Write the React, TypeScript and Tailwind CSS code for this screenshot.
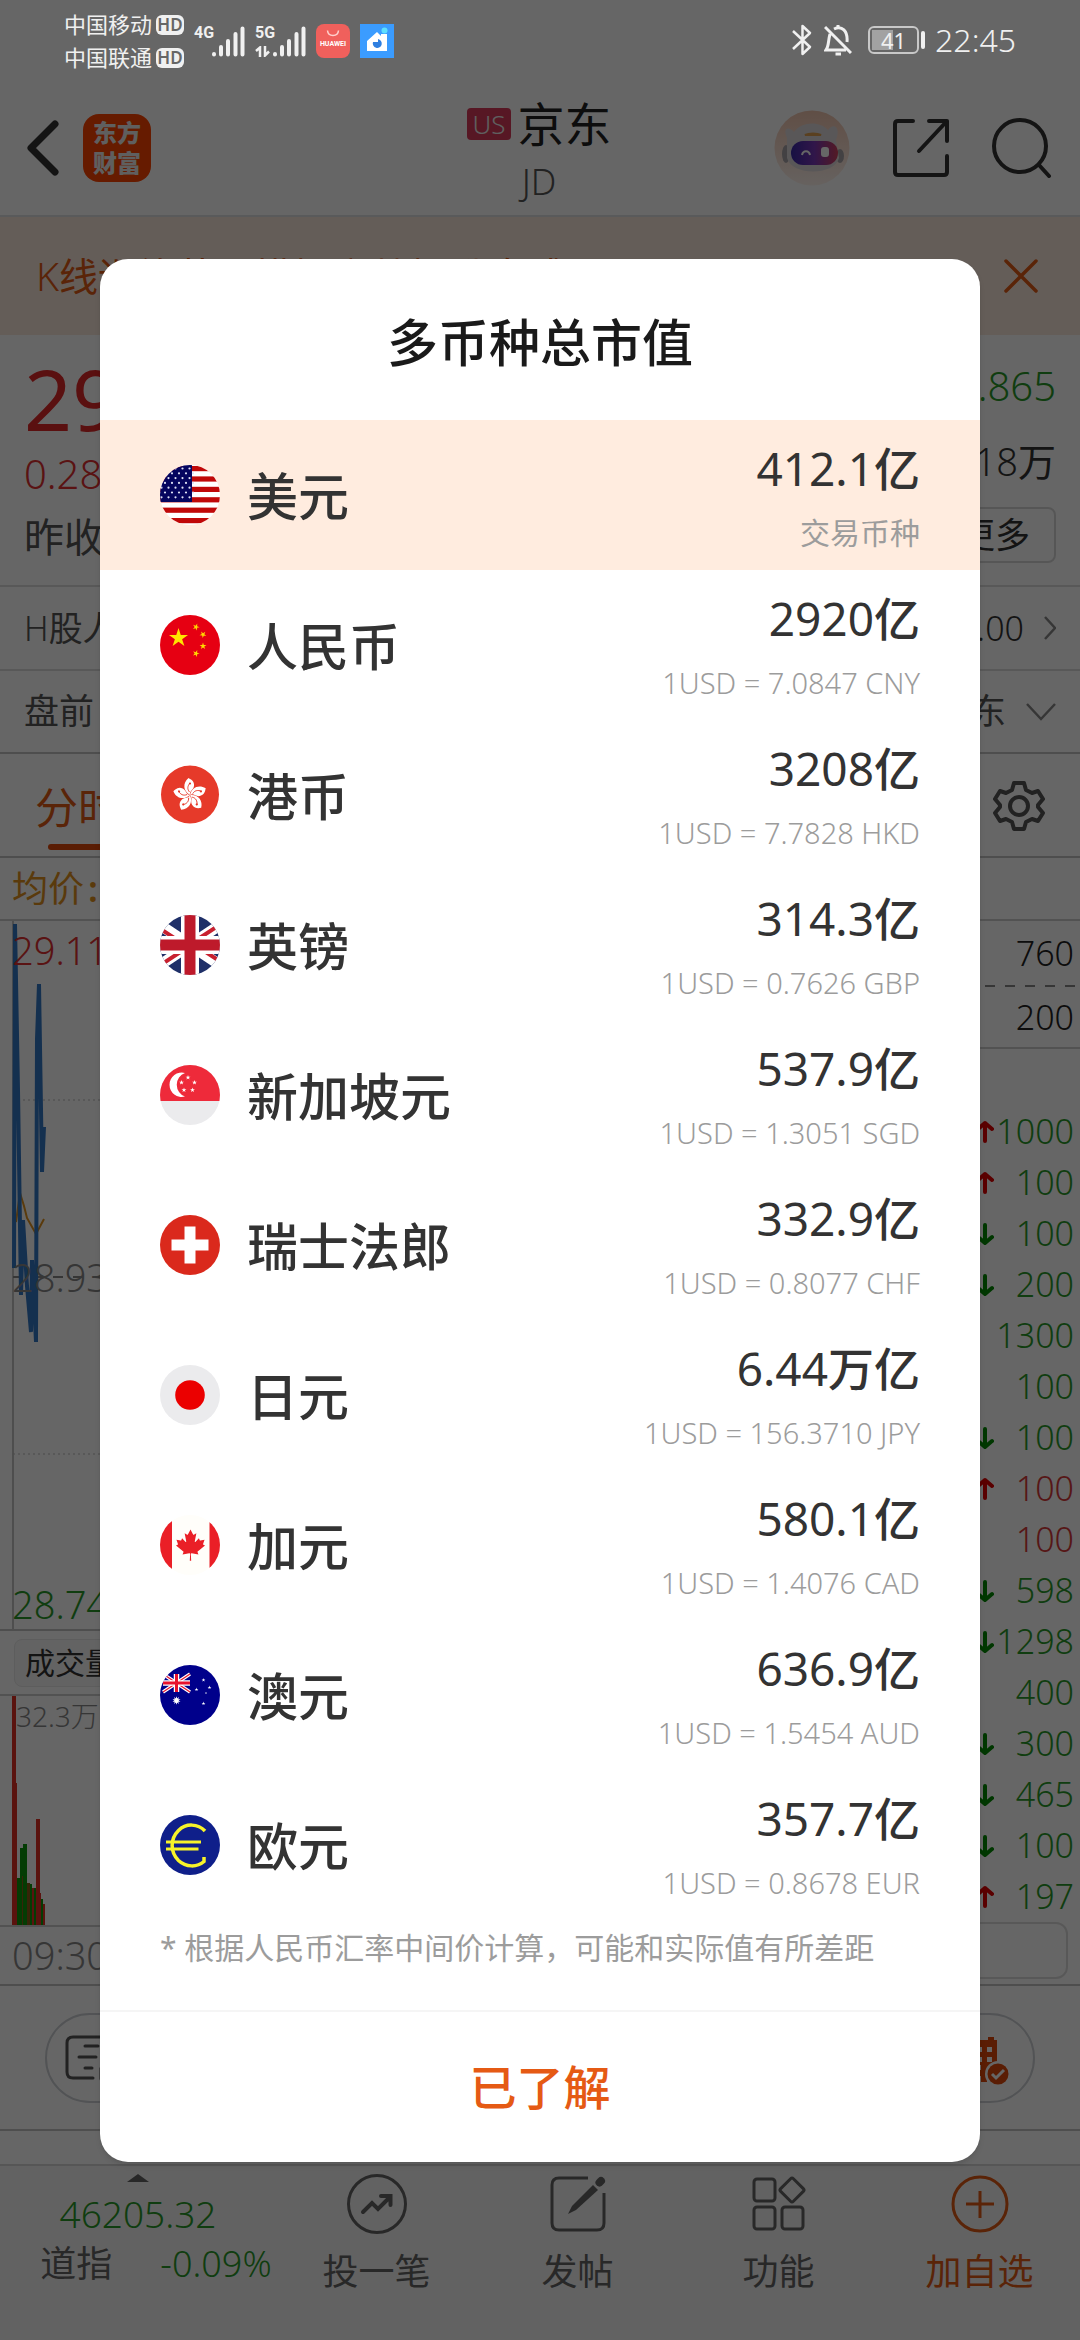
import type { ReactNode } from 'react';
import clsx from 'clsx';

/* ---------- flags ---------- */

function Flag({ id, children }: { id: string; children: ReactNode }) {
  return (
    <svg viewBox="0 0 60 60" className="size-15 shrink-0" aria-hidden="true">
      <clipPath id={`flag-${id}`}>
        <circle cx="30" cy="30" r="30" />
      </clipPath>
      <g clipPath={`url(#flag-${id})`}>{children}</g>
    </svg>
  );
}

const STAR = 'M0-1 .225-.309 .951-.309 .363.118 .588.809 0 .382-.588.809-.363.118-.951-.309-.225-.309Z';

function Star({ x, y, r, rotate = 0, fill = '#fff' }: { x: number; y: number; r: number; rotate?: number; fill?: string }) {
  return <path d={STAR} fill={fill} transform={`translate(${x} ${y}) rotate(${rotate}) scale(${r})`} />;
}

const MAPLE =
  'm-90 2030 45-863a95 95 0 0 0-111-98l-859 151 116-320a65 65 0 0 0-20-73l-941-762 212-99a65 65 0 0 0 34-79l-186-572 542 115a65 65 0 0 0 73-38l105-247 423 454a65 65 0 0 0 111-57l-204-1052 327 189a65 65 0 0 0 91-27l332-652 332 652a65 65 0 0 0 91 27l327-189-204 1052a65 65 0 0 0 111 57l423-454 105 247a65 65 0 0 0 73 38l542-115-186 572a65 65 0 0 0 34 79l212 99-941 762a65 65 0 0 0-20 73l116 320-859-151a95 95 0 0 0-111 98l45 863z';

const flags: Record<string, ReactNode> = {
  us: (
    <Flag id="us">
      <rect width="60" height="60" fill="#fff" />
      {[0, 1, 2, 3, 4, 5].map(i => (
        <rect key={i} y={1 + i * 10.4} width="60" height="5.2" fill="#c00808" />
      ))}
      <rect width="32" height="37" fill="#05055f" />
      {[0, 1, 2, 3, 4, 5, 6].map(r =>
        [0, 1, 2, 3, 4].map(c => (
          <circle key={`${r}-${c}`} cx={(r % 2 ? 5 : 1.5) + c * 7} cy={3.5 + r * 4.8} r="1.1" fill="#dfe2f5" />
        ))
      )}
    </Flag>
  ),
  cn: (
    <Flag id="cn">
      <rect width="60" height="60" fill="#e60012" />
      <Star x={18.5} y={23} r={10} fill="#ffe600" />
      <Star x={36} y={12} r={3.6} rotate={20} fill="#ffd800" />
      <Star x={43} y={19.5} r={3.6} rotate={40} fill="#ffd800" />
      <Star x={43} y={31} r={3.6} fill="#ffd800" />
      <Star x={36} y={38.5} r={3.6} rotate={20} fill="#ffd800" />
    </Flag>
  ),
  hk: (
    <Flag id="hk">
      <rect width="60" height="60" fill="#fff" />
      <circle cx="30" cy="29.5" r="29" fill="#e63a2a" />
      {[0, 72, 144, 216, 288].map(a => (
        <g key={a} transform={`translate(30 30) rotate(${a})`}>
          <path d="M0 0C-7-4-7.500-12-1.500-17C0-16 4.500-14.500 4-9C3.700-5-1-4 0 0Z" fill="#fff" />
          <path d="M-.5-3C-3-6-2.500-9 0-12" fill="none" stroke="#e63a2a" strokeWidth=".9" />
          <circle cx="0" cy="-11.500" r="1.100" fill="#e63a2a" />
        </g>
      ))}
    </Flag>
  ),
  gb: (
    <Flag id="gb">
      <rect width="60" height="60" fill="#1f2f68" />
      <path d="M-6 6 66 54M66 6-6 54" stroke="#fff" strokeWidth="11" />
      <path d="M-7 9 28 32M67 5 32 28M67 51 32 28M-7 55 28 32" stroke="#c8202f" strokeWidth="4" />
      <path d="M30 0V60M0 30H60" stroke="#fff" strokeWidth="18" />
      <path d="M30 0V60M0 30H60" stroke="#be1a2b" strokeWidth="11" />
    </Flag>
  ),
  sg: (
    <Flag id="sg">
      <rect width="60" height="60" fill="#ebebed" />
      <rect width="60" height="36" fill="#ee2a3a" />
      <path d="M25 8A12.200 12.200 0 1 0 25 31.500A12.500 12.500 0 0 1 25 8Z" fill="#fff" />
      <Star x={28} y={12.500} r={2.600} />
      <Star x={21.500} y={17.500} r={2.600} />
      <Star x={34.500} y={17.500} r={2.600} />
      <Star x={24} y={25} r={2.600} />
      <Star x={32.500} y={25} r={2.600} />
    </Flag>
  ),
  ch: (
    <Flag id="ch">
      <rect width="60" height="60" fill="#da291c" />
      <path d="M24.500 11.500h11v13h13v11h-13v13h-11v-13h-13v-11h13Z" fill="#fff" />
    </Flag>
  ),
  jp: (
    <Flag id="jp">
      <rect width="60" height="60" fill="#ebebed" />
      <circle cx="30" cy="30" r="14.800" fill="#eb0000" />
    </Flag>
  ),
  ca: (
    <Flag id="ca">
      <rect width="60" height="60" fill="#fffefa" />
      <rect width="12" height="60" fill="#ea1f27" />
      <rect x="49.500" width="12" height="60" fill="#ea1f27" />
      <path d={MAPLE} fill="#ea1f27" transform="translate(30.500 30) scale(.0078)" />
    </Flag>
  ),
  au: (
    <Flag id="au">
      <rect width="60" height="60" fill="#00008b" />
      <path d="M3 9 30 27M30 9 3 27" stroke="#fff" strokeWidth="3.400" />
      <path d="M3 9 30 27M30 9 3 27" stroke="#e8112d" strokeWidth="1.200" />
      <path d="M16.500 9V27M3 18H30" stroke="#fff" strokeWidth="5.500" />
      <path d="M16.500 9V27M3 18H30" stroke="#e8112d" strokeWidth="3" />
      <Star x={16.500} y={35.500} r={4.200} />
      <Star x={16.500} y={35.500} r={4.200} rotate={36} />
      <Star x={43.500} y={15} r={2} />
      <Star x={36.500} y={24.500} r={2} />
      <Star x={49.500} y={22.500} r={2} />
      <Star x={46} y={28} r={1.200} />
      <Star x={43.500} y={38.500} r={2} />
    </Flag>
  ),
  eu: (
    <Flag id="eu">
      <rect width="60" height="60" fill="#0f1f8a" />
      <path d="M45 16C38 8.500 26 8 18.500 15.500C10 24 10 37 18.500 45.500C26 52.500 37 52.500 44 46.500V42" fill="none" stroke="#f7f32a" strokeWidth="3.500" />
      <path d="M6 27H41M6 34H38.500" stroke="#f7f32a" strokeWidth="3" />
    </Flag>
  ),
};

/* ---------- data ---------- */

const currencies = [
  { flag: 'us', name: '美元', value: '412.1亿', note: '交易币种', active: true },
  { flag: 'cn', name: '人民币', value: '2920亿', note: '1USD = 7.0847 CNY' },
  { flag: 'hk', name: '港币', value: '3208亿', note: '1USD = 7.7828 HKD' },
  { flag: 'gb', name: '英镑', value: '314.3亿', note: '1USD = 0.7626 GBP' },
  { flag: 'sg', name: '新加坡元', value: '537.9亿', note: '1USD = 1.3051 SGD' },
  { flag: 'ch', name: '瑞士法郎', value: '332.9亿', note: '1USD = 0.8077 CHF' },
  { flag: 'jp', name: '日元', value: '6.44万亿', note: '1USD = 156.3710 JPY' },
  { flag: 'ca', name: '加元', value: '580.1亿', note: '1USD = 1.4076 CAD' },
  { flag: 'au', name: '澳元', value: '636.9亿', note: '1USD = 1.5454 AUD' },
  { flag: 'eu', name: '欧元', value: '357.7亿', note: '1USD = 0.8678 EUR' },
];

const trades = [
  { size: 1000, dir: 'up' },
  { size: 100, dir: 'up' },
  { size: 100, dir: 'down' },
  { size: 200, dir: 'down' },
  { size: 1300 },
  { size: 100 },
  { size: 100, dir: 'down' },
  { size: 100, dir: 'up', red: true },
  { size: 100, red: true },
  { size: 598, dir: 'down' },
  { size: 1298, dir: 'down' },
  { size: 400 },
  { size: 300, dir: 'down' },
  { size: 465, dir: 'down' },
  { size: 100, dir: 'down' },
  { size: 197, dir: 'up' },
];

// x, width, height, colour
const volumes: [number, number, number, string][] = [
  [12, 4, 231, '#e03024'],
  [15, 2, 144, '#e03024'],
  [17, 3, 49, '#0a960a'],
  [20, 3, 79, '#0a960a'],
  [22, 2, 51, '#8a5a14'],
  [23, 4, 83, '#0a960a'],
  [27, 3, 44, '#8a5a14'],
  [30, 2, 43, '#0a960a'],
  [32, 2, 39, '#e03024'],
  [34, 2, 39, '#0a960a'],
  [36, 4, 108, '#e03024'],
  [40, 1, 34, '#e03024'],
  [41, 2, 28, '#0a960a'],
  [43, 2, 23, '#e03024'],
];

/* ---------- status bar ---------- */

function Carrier({ name }: { name: string }) {
  return (
    <div className="flex items-center gap-1">
      <span className="text-[22px] leading-[33px]">{name}</span>
      <span className="flex h-5 w-7 items-center justify-center rounded-md bg-[#f0f0f0] text-[17px] font-semibold leading-5 text-[#666]">HD</span>
    </div>
  );
}

function Signal({ label, arrows }: { label: string; arrows?: boolean }) {
  return (
    <div className="flex h-8 items-end">
      <div className="flex h-full w-[18px] flex-col justify-between">
        <span className="font-['Roboto'] text-base font-bold leading-4">{label}</span>
        {arrows && (
          <svg viewBox="0 0 16 11" className="h-[11px] w-4" fill="none" stroke="currentColor" strokeWidth="2.500">
            <path d="M1 5 5 1.500V11M10 0V9.500L14 5.500" />
          </svg>
        )}
      </div>
      <svg viewBox="0 0 33 31" className="h-[31px] w-[33px]" stroke="currentColor" strokeWidth="4" strokeLinecap="round">
        <path d="M2 28V28.500M9 21V28.500M16 15V28.500M23.500 8V28.500M30.500 2.500V28.500" />
      </svg>
    </div>
  );
}

function StatusBar() {
  return (
    <div className="relative z-20 flex h-20 items-start justify-between px-16 pt-2 text-[#f0f0f0]">
      <div className="flex items-start">
        <div className="flex flex-col">
          <Carrier name="中国移动" />
          <Carrier name="中国联通" />
        </div>
        <div className="flex items-center gap-2.5 pl-2.5 pt-4">
          <Signal label="4G" />
          <Signal label="5G" arrows />
          <svg viewBox="0 0 34 34" className="size-[34px]">
            <rect width="34" height="34" rx="8" fill="#f0605c" />
            <path d="M11.500 6.500C12 13 22 13 22.500 6.500" fill="none" stroke="#ffd0cc" strokeWidth="1.500" />
            <text x="17" y="22" textAnchor="middle" fill="#fff" className="font-['Roboto'] text-[7px] font-bold">HUAWEI</text>
          </svg>
          <svg viewBox="0 0 34 34" className="size-[34px]">
            <rect width="34" height="34" fill="#3b9cff" />
            <path d="M7 17 17 8l4 4V10h6V27H7Z" fill="#fff" />
            <path d="M13 18a4.500 4.500 0 1 0 5-3v3Z" fill="#2f7fe0" />
            <circle cx="24.500" cy="6.500" r="3" fill="#5fe0ff" />
          </svg>
        </div>
      </div>
      <div className="flex items-center pt-3.5">
        <svg viewBox="0 0 20 32" className="mr-3 h-8 w-5" fill="none" stroke="currentColor" strokeWidth="2.500" strokeLinejoin="round">
          <path d="M1 7 18 23 10.500 30V2L18 9 1 25" />
        </svg>
        <svg viewBox="0 0 28 32" className="mr-4 h-8 w-7" fill="none" stroke="currentColor" strokeWidth="3">
          <path d="M1 3 27 29M6 10C4 17 5 22 2 26H22M10 5C18 1 24 7 23 18" />
          <path d="M14 1V4M11.500 30H17" />
        </svg>
        <div className="relative mr-0.5 flex h-7 w-[51px] items-center justify-center rounded-md border-2 border-[#c8c8c8]">
          <span className="absolute left-0.5 top-0.5 h-5 w-[21px] bg-[#a2a2a2]" />
          <span className="relative text-[22px] leading-5">41</span>
        </div>
        <span className="mr-2.5 h-[18px] w-1 rounded bg-[#f0f0f0]" />
        <span className="text-[32px] font-light leading-9">22:45</span>
      </div>
    </div>
  );
}

/* ---------- quote page ---------- */

function Header() {
  return (
    <header className="grid h-[137px] grid-cols-3 border-b-2 border-[#dfe2e4] pl-[26px] pr-7">
      <div className="flex items-center gap-6">
        <button aria-label="返回">
          <svg viewBox="0 0 33 56" className="h-14 w-[33px]" fill="none" stroke="#333" strokeWidth="7" strokeLinecap="round" strokeLinejoin="round">
            <path d="M29 4 5 28 29 52" />
          </svg>
        </button>
        <span className="flex size-[68px] flex-col items-center justify-center rounded-2xl bg-[#ff4500] text-2xl font-black leading-[30px] text-[#eee]">
          <span>东方</span>
          <span>财富</span>
        </span>
      </div>
      <div className="flex flex-col items-center pt-4">
        <h1 className="flex items-center gap-1.5 text-[47px] leading-[56px] text-[#222]">
          <span className="rounded-sm bg-[#d93a5a] px-1.5 text-[26px] font-light leading-8 text-[#eee]">US</span>
          京东
        </h1>
        <p className="text-4xl font-light leading-[60px] text-[#555]">JD</p>
      </div>
      <div className="flex items-center justify-end gap-[42px]">
        <svg viewBox="0 0 76 76" className="size-19">
          <defs>
            <linearGradient id="halo" x1="0" y1="0" x2="0" y2="1">
              <stop offset="0" stopColor="#f0c4ae" />
              <stop offset="1" stopColor="#fff4ee" />
            </linearGradient>
            <linearGradient id="visor">
              <stop offset="0" stopColor="#3a2aa8" />
              <stop offset=".5" stopColor="#7a38b8" />
              <stop offset="1" stopColor="#d0405c" />
            </linearGradient>
          </defs>
          <circle cx="38" cy="38" r="37.500" fill="url(#halo)" />
          <ellipse cx="12" cy="44" rx="4" ry="9" fill="#a8a4a8" />
          <ellipse cx="66" cy="46" rx="4" ry="7" fill="#a8a4a8" />
          <path d="M13 28C8 16 16 17 20 22 28 11 46 11 54 20 60 12 67 18 62 30L65 48C60 66 18 66 13 48Z" fill="#dedadc" />
          <path d="M31 25C35 23 43 23 47 25Z" fill="#e0a050" stroke="#e0a050" strokeWidth="2" />
          <rect x="17" y="31" width="47" height="24" rx="12" fill="url(#visor)" />
          <path d="M28 45C29 40 35 40 36 45" fill="none" stroke="#fff" strokeWidth="2" />
          <rect x="47" y="37" width="8" height="10" rx="3" fill="#fff" />
        </svg>
        <button aria-label="分享">
          <svg viewBox="0 0 58 60" className="h-15 w-[58px]" fill="none" stroke="#333" strokeWidth="4" strokeLinecap="round" strokeLinejoin="round">
            <path d="M21 3H6Q3 3 3 6V54Q3 57 6 57H52Q55 57 55 54V38M37 3H55V23M55 3 27 33" />
          </svg>
        </button>
        <button aria-label="搜索">
          <svg viewBox="0 0 60 60" className="size-15" fill="none" stroke="#333" strokeWidth="4" strokeLinecap="round">
            <circle cx="28" cy="28" r="26" />
            <path d="M47 47 57 58" />
          </svg>
        </button>
      </div>
    </header>
  );
}

function PriceChart() {
  return (
    <div className="min-w-0 flex-1">
      <div className="relative h-[710px] border-b-2 border-[#c4c4c4]">
        <svg className="h-full w-full" fill="none">
          <path d="M13 0V711" stroke="#c4c4c4" strokeWidth="2" />
          <path d="M13 179H800M13 533H800" stroke="#bbb" strokeDasharray="2 3" />
          <path d="M13 356H800" stroke="#888" strokeWidth="2" strokeDasharray="10 10" />
          <path d="M16 301 20 272 24 285 27 297 36 313 44 298" stroke="#e0921e" strokeWidth="2" />
          <path
            d="M14 347 15 3 18 169 21 374 23 299 27 365 31 411 32 339 36 421 37 118 39 63 42 251 44 206"
            stroke="#3478c6"
            strokeWidth="4"
          />
        </svg>
        <span className="absolute left-3 top-1 text-[38px] font-light leading-[50px] text-[#e03030]">29.11</span>
        <span className="absolute left-3 top-[331px] text-[38px] font-light leading-[50px] text-[#888]">28.93</span>
        <span className="absolute bottom-0 left-3 text-[38px] font-light leading-[50px] text-[#2a9a2a]">28.74</span>
      </div>
      <div className="flex h-[63px] items-center pl-3.5">
        <button className="rounded-lg border border-[#e8e8e8] bg-[#f8f8f8] px-2.5 text-[30px] leading-[46px] text-[#333]">成交量</button>
      </div>
      <div className="relative h-[233px] border-y-2 border-[#ccc]">
        <svg className="h-full w-full">
          {volumes.map(([x, w, h, fill]) => (
            <rect key={x} x={x} y={231 - h} width={w} height={h} fill={fill} />
          ))}
        </svg>
        <span className="absolute left-4 top-0 text-[28px] font-light leading-10 text-[#888]">32.3万</span>
      </div>
      <div className="pl-3 text-[38px] font-light leading-[57px] text-[#888]">09:30</div>
    </div>
  );
}

function Arrow({ up }: { up: boolean }) {
  return (
    <svg viewBox="0 0 18 24" className="h-6 w-[18px]" fill="none" stroke={up ? '#e00000' : '#008a00'} strokeWidth="4" strokeLinecap="round" strokeLinejoin="round">
      <path d={up ? 'M9 21V3M2 9 9 3 16 9' : 'M9 3V21M2 15 9 21 16 15'} />
    </svg>
  );
}

function Tape() {
  return (
    <div className="flex w-[260px] flex-col border-l-2 border-[#c4c4c4] text-right text-[34px] font-light text-[#222]">
      <div className="pr-1.5 leading-[64px]">760</div>
      <svg className="h-0.5 w-full">
        <path d="M3 1H260" stroke="#888" strokeWidth="2" strokeDasharray="10 10" />
      </svg>
      <div className="border-b-2 border-[#ccc] pr-1.5 leading-[60px]">200</div>
      <ul className="pt-[57px]">
        {trades.map((t, i) => (
          <li key={i} className={clsx('flex h-[51px] items-center justify-end pr-1.5', t.red ? 'text-[#d83a3a]' : 'text-[#2a9a2a]')}>
            {t.dir && <Arrow up={t.dir === 'up'} />}
            <span className="w-20">{t.size}</span>
          </li>
        ))}
      </ul>
      <div className="mr-3 h-[57px] rounded-xl border-2 border-[#ddd]" />
    </div>
  );
}

function Quote() {
  return (
    <>
      <div className="flex h-[118px] items-center justify-between bg-[#fbe9dd] pl-9 pr-[42px] text-[39px] text-[#e05a14]">
        <p><span className="font-light">K</span>线训练营，模拟实战提升盘感</p>
        <button aria-label="关闭">
          <svg viewBox="0 0 34 34" className="size-[34px]" fill="none" stroke="#e05a14" strokeWidth="3.500" strokeLinecap="round">
            <path d="M2 2 32 32M32 2 2 32" />
          </svg>
        </button>
      </div>

      <section className="flex h-[252px] justify-between border-b-2 border-[#ddd] pl-6 pr-6">
        <div className="pt-3.5">
          <div className="text-[84px] leading-[100px] text-[#e02828]">29.21</div>
          <div className="text-[40px] font-light leading-[50px] text-[#e03030]">0.28</div>
          <div className="pt-2 text-[40px] leading-[60px] text-[#555]">昨收</div>
        </div>
        <div className="flex flex-col items-end pt-[22px]">
          <span className="text-[40px] font-light leading-[58px] text-[#2a9a2a]">28.865</span>
          <span className="pt-4 text-[38px] font-light leading-[60px] text-[#333]">18<span className="font-normal">万</span></span>
          <button className="mt-4 rounded-lg border-2 border-[#d8d8d8] px-6 text-[35px] leading-[52px] text-[#333]">更多</button>
        </div>
      </section>

      <div className="flex h-[84px] items-center border-b-2 border-[#ddd] pl-6 pr-6 text-[34px] text-[#555]">
        <span className="flex-1"><span className="font-light">H</span>股人民币</span>
        <span className="pr-5 font-light text-[#333]">1.00</span>
        <svg viewBox="0 0 12 24" className="h-6 w-3" fill="none" stroke="#888" strokeWidth="2.500">
          <path d="M1 1 11 12 1 23" />
        </svg>
      </div>

      <div className="flex h-[83px] items-center border-b-2 border-[#c4c4c4] pl-6 pr-6 text-[35px] text-[#555]">
        <span className="flex-1">盘前</span>
        <span className="pr-5">京东</span>
        <svg viewBox="0 0 30 18" className="h-[18px] w-[30px]" fill="none" stroke="#888" strokeWidth="2.500">
          <path d="M1 1 15 16 29 1" />
        </svg>
      </div>

      <nav className="flex h-[104px] items-end justify-between border-b-2 border-[#c4c4c4] px-[35px]">
        <button className="flex flex-col items-center text-[43px] leading-[72px] text-[#e05a14]">
          分时
          <span className="mb-1.5 h-1.5 w-15 rounded-full bg-[#e04a0a]" />
        </button>
        <button aria-label="设置" className="pb-6">
          <svg viewBox="0 0 52 52" className="size-13" fill="none" stroke="#555" strokeWidth="4" strokeLinejoin="round">
            <path d="M21 3H31L33 10 39 13 45 11 50 19 45 25V27L50 33 45 41 39 39 33 42 31 49H21L19 42 13 39 7 41 2 33 7 27V25L2 19 7 11 13 13 19 10Z" />
            <circle cx="26" cy="26" r="9" />
          </svg>
        </button>
      </nav>

      <div className="h-[63px] border-b-2 border-[#ccc] pl-3 text-[36px] leading-[62px] text-[#e0921e]">均价<span className="pl-1 font-semibold">:</span></div>

      <div className="flex border-b-2 border-[#c4c4c4]">
        <PriceChart />
        <Tape />
      </div>

      <div className="flex h-[145px] items-center justify-between border-b-2 border-[#c4c4c4] px-[45px]">
        <button aria-label="交易" className="flex h-[90px] w-60 items-center rounded-full border-2 border-[#ccd0d4] pl-[18px]">
          <svg viewBox="0 0 46 46" className="size-[46px]" fill="none" stroke="#555" strokeWidth="3" strokeLinecap="round">
            <path d="M28 43H8Q2 43 2 37V8Q2 2 8 2H44M20 11H33M14 22H31M20 33H27M36 44V34H44" />
          </svg>
        </button>
        <button aria-label="弹幕" className="flex h-[90px] w-60 items-center justify-end rounded-full border-2 border-[#ccd0d4] pr-6">
          <svg viewBox="0 0 52 54" className="h-[54px] w-13">
            <path d="M14 9H18V6H23V9H31V6H37V9H40V34H32V39H38V45H30V51H24V45H12V39H24V34H14Z" fill="#e04a0a" />
            <path d="M21 16H25V21H21ZM30 16H35V21H30ZM21 26H25V31H21ZM30 26H35V31H30Z" fill="#fff" />
            <circle cx="41" cy="43" r="13" fill="#fff" />
            <circle cx="41" cy="43" r="10.500" fill="#e04a0a" />
            <path d="M35 43 39 47 47 39" fill="none" stroke="#fff" strokeWidth="3" />
          </svg>
        </button>
      </div>
    </>
  );
}

const actions = [
  {
    label: '投一笔',
    icon: (
      <>
        <circle cx="30" cy="30" r="28.500" />
        <path d="M16 38 25 29 31 35 43 23M34 22H43.500V31" strokeWidth="4" strokeLinecap="round" />
      </>
    ),
  },
  {
    label: '发帖',
    icon: (
      <>
        <path d="M40 4H11Q4 4 4 11V49Q4 56 11 56H49Q56 56 56 49V19" />
        <path d="M51.500 8.500 53 7" strokeWidth="8" strokeLinecap="round" />
        <path d="M45 11 50 16 28 36 20 40 24 32Z" fill="currentColor" stroke="none" />
      </>
    ),
  },
  {
    label: '功能',
    icon: (
      <>
        <rect x="5" y="5" width="21" height="22" rx="3" />
        <rect x="5" y="33" width="21" height="22" rx="3" />
        <rect x="33" y="33" width="21" height="22" rx="3" />
        <rect x="34" y="7" width="18" height="18" rx="2" transform="rotate(45 43 16)" />
      </>
    ),
  },
  {
    label: '加自选',
    accent: true,
    icon: (
      <>
        <circle cx="30" cy="30" r="27" />
        <path d="M30 17V44M16 30H44" />
      </>
    ),
  },
];

function BottomBar() {
  return (
    <footer className="mt-[33px] flex min-h-[177px] flex-1 items-start border-t-2 border-[#d8d8d8] bg-[#f6f6f6]">
      <div className="flex w-[276px] flex-col items-center pt-2 text-[#2a9a2a]">
        <svg viewBox="0 0 22 8" className="h-2 w-[22px]">
          <path d="M0 8 11 0 22 8Z" fill="#646464" />
        </svg>
        <span className="pt-2 text-[37px] font-light leading-[48px]">46205.32</span>
        <span className="flex items-center gap-12 pl-9 text-[36px] font-light leading-[52px]">
          <span className="font-normal text-[#646464]">道指</span>
          -0.09%
        </span>
      </div>
      {actions.map(a => (
        <button key={a.label} className={clsx('flex flex-1 flex-col items-center gap-3 pt-2', a.accent ? 'text-[#e05a14]' : 'text-[#646464]')}>
          <svg viewBox="0 0 60 60" className="size-15" fill="none" stroke="currentColor" strokeWidth="3">
            {a.icon}
          </svg>
          <span className="text-[36px] leading-[52px]">{a.label}</span>
        </button>
      ))}
    </footer>
  );
}

/* ---------- dialog ---------- */

function MarketCapDialog() {
  return (
    <div className="absolute inset-0 z-10 flex items-start justify-center bg-black/60 px-[100px] pt-[259px]">
      <div role="dialog" aria-labelledby="cap-title" className="w-full overflow-hidden rounded-[28px] bg-white shadow-md">
        <h2 id="cap-title" className="pb-[42px] pt-12 text-center text-[51px] font-medium leading-[71px] text-[#1a1a1a]">多币种总市值</h2>
        <ul>
          {currencies.map(c => (
            <li key={c.flag} className={clsx('flex h-[150px] items-center px-15', c.active && 'bg-[#ffecdf]')}>
              {flags[c.flag]}
              <span className="flex-1 pl-[27px] pt-0.5 text-[51px] font-medium text-[#333]">{c.name}</span>
              <span className="flex flex-col items-end pt-3">
                <span className="text-[46px] leading-[64px] text-[#333]">
                  {c.value.replace(/[万亿]+/, '')}
                  <span className="font-medium">{c.value.replace(/[\d.]+/, '')}</span>
                </span>
                <span className={clsx('leading-[66px] text-[#9c9c9c]', c.active ? 'text-[30px]' : 'text-[29px] font-light')}>{c.note}</span>
              </span>
            </li>
          ))}
        </ul>
        <p className="px-15 pb-[38px] pt-1 text-[30px] leading-[48px] text-[#9c9c9c]">* 根据人民币汇率中间价计算，可能和实际值有所差距</p>
        <button className="w-full border-t-2 border-[#f5f5f5] text-[47px] font-medium leading-[150px] text-[#e55a14]">已了解</button>
      </div>
    </div>
  );
}

export default function App() {
  return (
    <div className="relative flex min-h-screen flex-col overflow-hidden bg-white font-['Noto_Sans','Noto_Sans_CJK_SC',sans-serif]">
      <StatusBar />
      <Header />
      <Quote />
      <BottomBar />
      <MarketCapDialog />
    </div>
  );
}
